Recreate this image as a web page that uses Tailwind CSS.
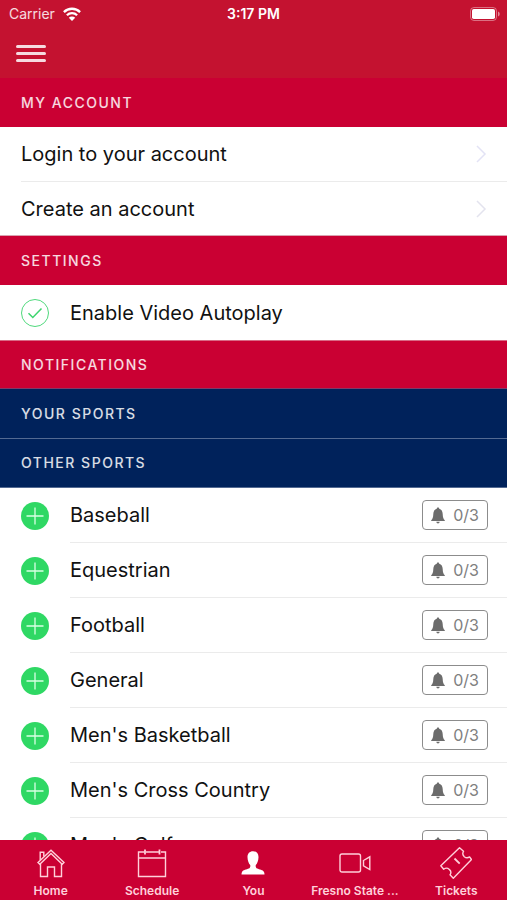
<!DOCTYPE html>
<html lang="en">
<head>
<meta charset="utf-8">
<meta name="viewport" content="width=device-width, initial-scale=1">
<title>You</title>
<script src="https://cdn.jsdelivr.net/npm/@tailwindcss/browser@4"></script>
</head>
<body class="flex h-screen flex-col overflow-hidden bg-white font-[Inter,'Liberation_Sans',sans-serif] text-xl text-[#111111]">
<svg class="hidden" aria-hidden="true">
  <symbol id="chevron" viewBox="0 0 12 20"><path d="M2 2l8 8-8 8" fill="none" stroke="currentColor" stroke-width="1.5"/></symbol>
  <symbol id="plus" viewBox="0 0 28 28"><circle cx="14" cy="14" r="14" fill="#2fd864"/><path d="M14 5.5v17M5.500 14h17" stroke="#d9ffe4" stroke-width="1.300"/></symbol>
  <symbol id="bell" viewBox="0 0 14 17"><path d="M7 0.500c.8 0 1.200.5 1.200 1.200C10.500 2.300 11.600 4.300 11.700 7c.1 3.200.6 5 2.100 6.200v.8H.2v-.8C1.700 12 2.200 10.200 2.300 7 2.400 4.300 3.500 2.300 5.800 1.700 5.800 1 6.200.5 7 .5zM5.300 14.800h3.400c-.2 1-.8 1.600-1.700 1.600s-1.500-.6-1.700-1.600z" fill="currentColor"/></symbol>
</svg>

<header class="shrink-0 bg-[#c41230] text-white">
  <div class="grid h-7 grid-cols-3 items-center px-[7px]">
    <div class="flex items-center gap-2 pl-[2px] text-white/85">
      <span class="text-sm">Carrier</span>
      <svg class="h-[14px] w-[18px] text-white" viewBox="0 0 18 14" aria-label="Wi-Fi"><g fill="none" stroke="currentColor" stroke-width="2.300"><path d="M.9 5.100a11.500 11.500 0 0 1 16.200 0"/><path d="M3.900 8.300a7.200 7.200 0 0 1 10.200 0"/></g><path d="M9 14l-3.200-3.300a4.600 4.600 0 0 1 6.400 0z" fill="currentColor"/></svg>
    </div>
    <span class="text-center text-sm font-semibold">3:17 PM</span>
    <svg class="h-[14px] w-[30px] justify-self-end" viewBox="0 0 30 14" aria-label="Battery full"><rect x=".5" y=".5" width="26" height="13" rx="3.500" fill="none" stroke="#fff" stroke-opacity=".4"/><rect x="2" y="2" width="23" height="10" rx="1.800" fill="#fff"/><path d="M28 4.500c1.200.5 1.700 1.400 1.700 2.500S29.200 9 28 9.500z" fill="#fff" fill-opacity=".5"/></svg>
  </div>
  <div class="flex h-[50px] items-center px-4">
    <button type="button" aria-label="Menu" class="flex w-[30px] flex-col gap-1 py-2">
      <span class="h-[3px] rounded-full bg-white/85"></span>
      <span class="h-[3px] rounded-full bg-white/85"></span>
      <span class="h-[3px] rounded-full bg-white/85"></span>
    </button>
  </div>
</header>

<main class="min-h-0 flex-1 overflow-y-auto [scrollbar-width:none]">
  <h2 class="flex h-[49px] items-center bg-[#ca0033] px-[21px] text-sm font-medium tracking-[1.5px] text-white/85">MY ACCOUNT</h2>
  <ul class="border-b border-[#d9a3b0] pl-[21px]">
    <li class="border-b border-[#ebebeb]"><a href="#login" class="flex h-[54px] items-center justify-between pr-5"><span>Login to your account</span><svg class="h-5 w-3 text-[#e3e3f5]" aria-hidden="true"><use href="#chevron"/></svg></a></li>
    <li><a href="#create" class="flex h-[53px] items-center justify-between pr-5"><span>Create an account</span><svg class="h-5 w-3 text-[#e3e3ee]" aria-hidden="true"><use href="#chevron"/></svg></a></li>
  </ul>

  <h2 class="flex h-[49px] items-center bg-[#ca0033] px-[21px] text-sm font-medium tracking-[1.5px] text-white/85">SETTINGS</h2>
  <label class="flex h-[55px] items-center gap-[21px] px-[21px]">
    <span class="grid size-7 place-items-center">
      <input type="checkbox" checked class="peer col-start-1 row-start-1 size-7 appearance-none rounded-full border border-[#4fd97c]">
      <svg class="pointer-events-none invisible col-start-1 row-start-1 size-7 peer-checked:visible" viewBox="0 0 28 28" aria-hidden="true"><path d="M7.500 14.300l4.300 4.200L20.500 9.500" fill="none" stroke="#3dd56e" stroke-width="1.500"/></svg>
    </span>
    <span>Enable Video Autoplay</span>
  </label>

  <h2 class="flex h-[49px] items-center border-y border-t-[#d96a86] border-b-[#7f3a69] bg-[#ca0033] px-[21px] text-sm font-medium tracking-[1.5px] text-white/85">NOTIFICATIONS</h2>
  <h3 class="flex h-[50px] items-center border-b border-[#536a92] bg-[#00225b] px-[21px] text-sm font-medium tracking-[1.5px] text-white/85">YOUR SPORTS</h3>
  <h3 class="flex h-[49px] items-center border-b border-[#536a92] bg-[#00225b] px-[21px] text-sm font-medium tracking-[1.5px] text-white/85">OTHER SPORTS</h3>

  <ul>
    <li class="flex h-[55px] items-center gap-[21px] pl-[21px]"><button type="button" aria-label="Add Baseball"><svg class="size-7"><use href="#plus"/></svg></button><div class="flex h-full flex-1 items-center justify-between border-b border-[#ebebeb] pr-[19px]"><span>Baseball</span><button type="button" class="flex h-[30px] w-[66px] items-center justify-center gap-2 rounded border border-[#8c8c8c] text-base text-[#808080]"><svg class="h-[17px] w-[14px] text-[#6c6c6c]"><use href="#bell"/></svg>0/3</button></div></li>
    <li class="flex h-[55px] items-center gap-[21px] pl-[21px]"><button type="button" aria-label="Add Equestrian"><svg class="size-7"><use href="#plus"/></svg></button><div class="flex h-full flex-1 items-center justify-between border-b border-[#ebebeb] pr-[19px]"><span>Equestrian</span><button type="button" class="flex h-[30px] w-[66px] items-center justify-center gap-2 rounded border border-[#8c8c8c] text-base text-[#808080]"><svg class="h-[17px] w-[14px] text-[#6c6c6c]"><use href="#bell"/></svg>0/3</button></div></li>
    <li class="flex h-[55px] items-center gap-[21px] pl-[21px]"><button type="button" aria-label="Add Football"><svg class="size-7"><use href="#plus"/></svg></button><div class="flex h-full flex-1 items-center justify-between border-b border-[#ebebeb] pr-[19px]"><span>Football</span><button type="button" class="flex h-[30px] w-[66px] items-center justify-center gap-2 rounded border border-[#8c8c8c] text-base text-[#808080]"><svg class="h-[17px] w-[14px] text-[#6c6c6c]"><use href="#bell"/></svg>0/3</button></div></li>
    <li class="flex h-[55px] items-center gap-[21px] pl-[21px]"><button type="button" aria-label="Add General"><svg class="size-7"><use href="#plus"/></svg></button><div class="flex h-full flex-1 items-center justify-between border-b border-[#ebebeb] pr-[19px]"><span>General</span><button type="button" class="flex h-[30px] w-[66px] items-center justify-center gap-2 rounded border border-[#8c8c8c] text-base text-[#808080]"><svg class="h-[17px] w-[14px] text-[#6c6c6c]"><use href="#bell"/></svg>0/3</button></div></li>
    <li class="flex h-[55px] items-center gap-[21px] pl-[21px]"><button type="button" aria-label="Add Men's Basketball"><svg class="size-7"><use href="#plus"/></svg></button><div class="flex h-full flex-1 items-center justify-between border-b border-[#ebebeb] pr-[19px]"><span>Men's Basketball</span><button type="button" class="flex h-[30px] w-[66px] items-center justify-center gap-2 rounded border border-[#8c8c8c] text-base text-[#808080]"><svg class="h-[17px] w-[14px] text-[#6c6c6c]"><use href="#bell"/></svg>0/3</button></div></li>
    <li class="flex h-[55px] items-center gap-[21px] pl-[21px]"><button type="button" aria-label="Add Men's Cross Country"><svg class="size-7"><use href="#plus"/></svg></button><div class="flex h-full flex-1 items-center justify-between border-b border-[#ebebeb] pr-[19px]"><span>Men's Cross Country</span><button type="button" class="flex h-[30px] w-[66px] items-center justify-center gap-2 rounded border border-[#8c8c8c] text-base text-[#808080]"><svg class="h-[17px] w-[14px] text-[#6c6c6c]"><use href="#bell"/></svg>0/3</button></div></li>
    <li class="flex h-[55px] items-center gap-[21px] pl-[21px]"><button type="button" aria-label="Add Men's Golf"><svg class="size-7"><use href="#plus"/></svg></button><div class="flex h-full flex-1 items-center justify-between border-b border-[#ebebeb] pr-[19px]"><span>Men's Golf</span><button type="button" class="flex h-[30px] w-[66px] items-center justify-center gap-2 rounded border border-[#8c8c8c] text-base text-[#808080]"><svg class="h-[17px] w-[14px] text-[#6c6c6c]"><use href="#bell"/></svg>0/3</button></div></li>
  </ul>
</main>

<nav class="grid shrink-0 grid-cols-5 bg-[#ca0033] pt-[7px] pb-px text-xs font-semibold text-[#ffd0da]">
  <a href="#home" class="flex flex-col items-center gap-1">
    <svg class="size-8" viewBox="0 0 32 32" fill="none" stroke="currentColor" stroke-width="1.400"><path d="M3 15.500L16 3.200l13 12.300-1.800 1.800L16 6.500 4.800 17.300z"/><path d="M5.500 17v12.500h7V20h7v9.500h7V17M5.200 13V5.300h3.600v4.300"/></svg>
    <span>Home</span>
  </a>
  <a href="#schedule" class="flex flex-col items-center gap-1">
    <svg class="size-8" viewBox="0 0 32 32" fill="none" stroke="currentColor" stroke-width="1.400"><path d="M8.500 5H2.500v24.500h27V5H25M9.700 5h13.600M2.500 11h27"/><path d="M9 2.500v5M23.500 2.500v5" stroke-width="1.800"/></svg>
    <span>Schedule</span>
  </a>
  <a href="#you" aria-current="page" class="flex flex-col items-center gap-1">
    <svg class="size-8" viewBox="0 0 32 32" fill="#fff"><path d="M16 4.200c3.500 0 5.600 2.400 5.500 6-.1 3.400-1.200 6.200-2.700 7.800-.4 1.500.1 2.900 1.400 3.600 2.100 1 5.700 1.300 6.800 3.400.4.900.5 1.600.5 2.500h-23c0-.9.1-1.600.5-2.500 1.100-2.100 4.700-2.400 6.800-3.400 1.300-.7 1.800-2.100 1.400-3.600-1.500-1.600-2.600-4.400-2.700-7.800-.1-3.600 2-6 5.500-6z"/></svg>
    <span>You</span>
  </a>
  <a href="#video" class="flex flex-col items-center gap-1 whitespace-nowrap">
    <svg class="size-8" viewBox="0 0 32 32" fill="none" stroke="currentColor" stroke-width="1.400"><rect x="1" y="7" width="20.500" height="18" rx="2"/><path d="M24.500 13.500l6.300-3.700v12.700l-6.300-3.700z"/></svg>
    <span>Fresno State ...</span>
  </a>
  <a href="#tickets" class="flex flex-col items-center gap-1">
    <svg class="size-8" viewBox="0 0 32 32" fill="none" stroke="currentColor" stroke-width="1.400" stroke-linejoin="round"><path d="M19.500.8l4 3.500c-1.200 2-.7 4 .8 5.400 1.600 1.300 3.500 1.400 5.300.2l1.900 2.600L13.300 31.200l-3.300-3.400c1.400-2 .9-4-.7-5.400-1.600-1.500-3.800-1.500-5.600-.2L.8 18.800z"/><path d="M14.500 11.500l5.200 5.200" stroke-width="1.800"/></svg>
    <span>Tickets</span>
  </a>
</nav>
</body>
</html>
